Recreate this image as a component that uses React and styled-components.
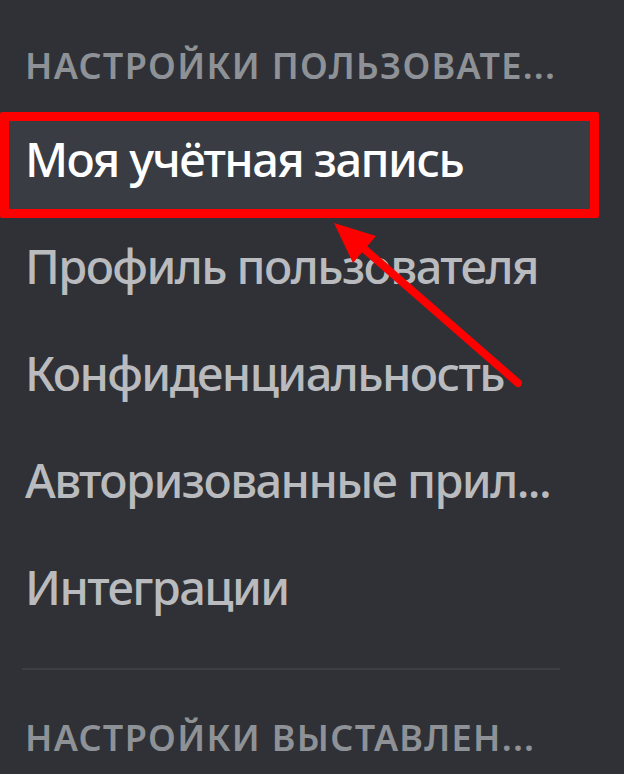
import React from 'react';
import styled, { createGlobalStyle } from 'styled-components';

const GlobalStyle = createGlobalStyle`
  html, body {
    margin: 0;
    padding: 0;
    background: #2f3136;
  }
  body {
    font-family: "Noto Sans", "DejaVu Sans", sans-serif;
    -webkit-font-smoothing: antialiased;
  }
`;

const Sidebar = styled.nav`
  position: relative;
  width: 624px;
  height: 774px;
  padding-top: 42px;
  box-sizing: border-box;
  overflow: hidden;
  background: #2f3136;
`;

const Header = styled.div`
  padding: 0 40px 0 25px;
  margin-bottom: ${(p) => p.$gap || 0}px;
  line-height: 48px;
  font-size: 36px;
  font-weight: 600;
  letter-spacing: 1.3px;
  text-transform: uppercase;
  color: #8e9297;
  white-space: nowrap;
  overflow: hidden;
`;

const Item = styled.div`
  position: relative;
  width: 592px;
  box-sizing: border-box;
  padding: 13px 30px 24px 25px;
  margin-bottom: 6px;
  line-height: 64px;
  font-size: 47px;
  font-weight: 500;
  letter-spacing: -1.6px;
  white-space: nowrap;
  overflow: hidden;
  color: ${(p) => (p.$active ? '#ffffff' : '#b9bbbe')};
  background: ${(p) => (p.$active ? '#393c43' : 'transparent')};
`;

const Separator = styled.div`
  height: 2px;
  width: 538px;
  margin: 25px 0 44px 22px;
  background: #3b3e44;
`;

const Highlight = styled.div`
  position: absolute;
  left: 0;
  top: 112px;
  width: 599px;
  height: 106px;
  box-sizing: border-box;
  border: 9px solid #ff0000;
  border-radius: 2px;
  pointer-events: none;
`;

const Overlay = styled.svg`
  position: absolute;
  left: 0;
  top: 0;
  pointer-events: none;
`;

const items = [
  'Моя учётная запись',
  'Профиль пользователя',
  'Конфиденциальность',
  'Авторизованные прил...',
  'Интеграции',
];

export default function App() {
  return (
    <>
      <GlobalStyle />
      <Sidebar>
        <Header $gap={24}>Настройки пользовате...</Header>
        {items.map((label, i) => (
          <Item key={label} $active={i === 0}>
            {label}
          </Item>
        ))}
        <Separator />
        <Header>Настройки выставлен...</Header>
        <Highlight />
        <Overlay width="624" height="774" viewBox="0 0 624 774">
          <line x1="518" y1="383" x2="362" y2="247" stroke="#ff0000" strokeWidth="8" strokeLinecap="round" />
          <polygon points="334,223 376,236 353,263" fill="#ff0000" />
        </Overlay>
      </Sidebar>
    </>
  );
}
